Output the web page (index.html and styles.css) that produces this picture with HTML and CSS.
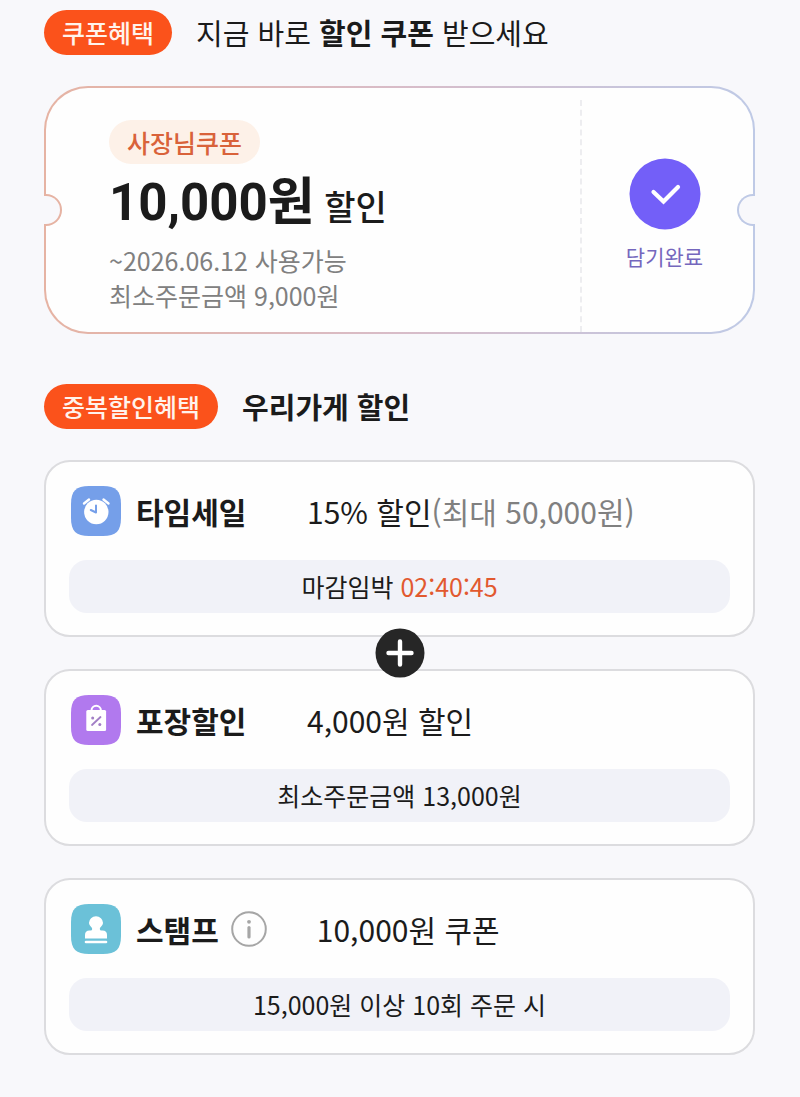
FILE: index.html
```html
<!DOCTYPE html>
<html lang="ko">
<head>
    <meta charset="UTF-8">
    <meta name="viewport" content="width=device-width, initial-scale=1.0">
    <title>할인 쿠폰</title>
    <link rel="stylesheet" href="styles.css">
</head>
<body>
    <main>
        <section>
            <header class="section-header">
                <span class="tag">쿠폰혜택</span>
                <h2 class="light">지금 바로 <strong>할인 쿠폰</strong> 받으세요</h2>
            </header>

            <div class="coupon">
                <div class="coupon-info">
                    <span class="owner-badge">사장님쿠폰</span>
                    <p class="amount"><strong>10,000원</strong> 할인</p>
                    <p class="terms">~2026.06.12 사용가능</p>
                    <p class="terms">최소주문금액 9,000원</p>
                </div>
                <div class="coupon-action">
                    <button type="button" class="download">
                        <svg width="72" height="72" viewBox="0 0 72 72" aria-hidden="true">
                            <circle cx="36" cy="36" r="35.5" fill="#735ff8"/>
                            <path d="M24.5 34 L34.5 43.5 L49 29" fill="none" stroke="#fff" stroke-width="4.2" stroke-linecap="round"/>
                        </svg>
                        <span>담기완료</span>
                    </button>
                </div>
                <span class="notch notch-left"></span>
                <span class="notch notch-right"></span>
            </div>
        </section>

        <section>
            <header class="section-header">
                <span class="tag">중복할인혜택</span>
                <h2>우리가게 할인</h2>
            </header>

            <div class="benefits">
                <article class="card">
                    <div class="card-row">
                        <svg class="icon" viewBox="0 0 50 50" aria-hidden="true">
                            <path d="M18 0H32C45 0 50 5 50 18V32C50 45 45 50 32 50H18C5 50 0 45 0 32V18C0 5 5 0 18 0Z" fill="#759fe9"/>
                            <circle cx="25.3" cy="26" r="12.2" fill="#fff"/>
                            <path d="M13 17.5 L18 13.5 M32.5 13.5 L37.5 17.5" stroke="#fff" stroke-width="2.4" stroke-linecap="round"/>
                            <path d="M25 19.5 V26.5 L19.8 24" fill="none" stroke="#759fe9" stroke-width="2" stroke-linecap="round" stroke-linejoin="round"/>
                        </svg>
                        <div class="name"><h3>타임세일</h3></div>
                        <p class="value">15% 할인<span class="limit">(최대 50,000원)</span></p>
                    </div>
                    <p class="note">마감임박 <span class="timer">02:40:45</span></p>
                </article>

                <article class="card">
                    <span class="plus">
                        <svg width="50" height="50" viewBox="0 0 50 50" aria-hidden="true">
                            <circle cx="25" cy="25" r="24.5" fill="#262626"/>
                            <path d="M25 13.5 V36.5 M13.5 25 H36.5" stroke="#fff" stroke-width="4.4" stroke-linecap="round"/>
                        </svg>
                    </span>
                    <div class="card-row">
                        <svg class="icon" viewBox="0 0 50 50" aria-hidden="true">
                            <path d="M18 0H32C45 0 50 5 50 18V32C50 45 45 50 32 50H18C5 50 0 45 0 32V18C0 5 5 0 18 0Z" fill="#b179ee"/>
                            <path d="M20.5 17 V15.5 A4.7 4.7 0 0 1 29.9 15.5 V17" fill="none" stroke="#fff" stroke-width="2"/>
                            <rect x="15.3" y="15" width="19.8" height="21" rx="1.5" fill="#fff"/>
                            <path d="M21 30 L29.5 22" stroke="#a27fc6" stroke-width="1.8" stroke-linecap="round"/>
                            <circle cx="21.7" cy="23" r="1.5" fill="#a27fc6"/>
                            <circle cx="28.8" cy="29.5" r="1.5" fill="#a27fc6"/>
                        </svg>
                        <div class="name"><h3>포장할인</h3></div>
                        <p class="value">4,000원 할인</p>
                    </div>
                    <p class="note">최소주문금액 13,000원</p>
                </article>

                <article class="card">
                    <div class="card-row">
                        <svg class="icon" viewBox="0 0 50 50" aria-hidden="true">
                            <path d="M18 0H32C45 0 50 5 50 18V32C50 45 45 50 32 50H18C5 50 0 45 0 32V18C0 5 5 0 18 0Z" fill="#6bc1d8"/>
                            <path d="M21.2 25 C21.2 23 18 22 18 18.8 A7 6.6 0 0 1 32 18.8 C32 22 28.8 23 28.8 25 Q28.8 26.5 30.5 26.5 H31.5 Q36 26.5 36 31 V34.5 H14 V31 Q14 26.5 18.5 26.5 H19.5 Q21.2 26.5 21.2 25Z" fill="#fff"/>
                            <path d="M15 38 H35" stroke="#fff" stroke-width="2.6" stroke-linecap="round"/>
                        </svg>
                        <div class="name">
                            <h3>스탬프</h3>
                            <button type="button" class="info" aria-label="스탬프 안내">
                                <svg width="36" height="36" viewBox="0 0 36 36" aria-hidden="true">
                                    <circle cx="18" cy="18" r="16.8" fill="none" stroke="#a6a6a6" stroke-width="2"/>
                                    <circle cx="18" cy="10.8" r="1.9" fill="#a6a6a6"/>
                                    <path d="M18 16.5 V26" stroke="#a6a6a6" stroke-width="3.2" stroke-linecap="round"/>
                                </svg>
                            </button>
                        </div>
                        <p class="value">10,000원 쿠폰</p>
                    </div>
                    <p class="note">15,000원 이상 10회 주문 시</p>
                </article>
            </div>
        </section>
    </main>
</body>
</html>
```
FILE: styles.css
```css
* {
    box-sizing: border-box;
}

body {
    margin: 0;
    background-color: #f8f8fb;
    color: #1b1b1b;
    font-family: "Noto Sans CJK KR", sans-serif;
    font-size: 25px;
}

h2, h3, p {
    margin: 0;
}

button {
    padding: 0;
    border: none;
    background: none;
    font-family: inherit;
    cursor: pointer;
}

main {
    display: flex;
    flex-direction: column;
    gap: 50px;
    padding: 10px 45px 42px 44px;
}

.section-header {
    display: flex;
    align-items: center;
    gap: 24px;
    margin-bottom: 31px;
}

.section-header h2 {
    padding-bottom: 2px;
    font-size: 29px;
    line-height: 42px;
    font-weight: 700;
}

.section-header h2.light {
    font-weight: 400;
}

.tag {
    padding: 0 18px;
    border-radius: 23px;
    background-color: #fb521b;
    color: #fff3ec;
    font-weight: 500;
    line-height: 45px;
}

/* Coupon */
.coupon {
    position: relative;
    display: flex;
    border: 2px solid transparent;
    border-radius: 44px;
    background: linear-gradient(#fefefe, #fefefe) padding-box,
                linear-gradient(90deg, #e6b3a3, #d8bcc8 50%, #bfcae6) border-box;
}

.coupon-info {
    flex: 1;
    padding: 32px 0 19px 63px;
}

.owner-badge {
    display: block;
    width: fit-content;
    padding: 0 18px;
    border-radius: 22px;
    background-color: #fdf1e8;
    color: #d9623a;
    font-weight: 500;
    line-height: 44px;
}

.amount {
    padding-top: 2px;
    font-size: 34px;
    font-weight: 500;
    line-height: 74px;
}

.amount strong {
    font-family: Roboto, "Noto Sans CJK KR", sans-serif;
    font-size: 51px;
    font-weight: 700;
}

.terms {
    color: #808080;
    font-weight: 400;
    line-height: 35px;
}

.coupon-action {
    display: flex;
    justify-content: center;
    width: 173px;
    margin-top: 12px;
    padding: 58px 6px 0 0;
    border-left: 2px dashed #ededf0;
}

.download {
    display: flex;
    flex-direction: column;
    align-items: center;
    align-self: flex-start;
    gap: 11px;
    color: #7567bd;
    font-size: 21px;
    line-height: 30px;
}

.notch {
    position: absolute;
    top: 50%;
    width: 18px;
    height: 32px;
    margin-top: -16px;
    background-color: #f8f8fb;
}

.notch-left {
    left: -2px;
    border: 2px solid #e6b3a3;
    border-left: none;
    border-radius: 0 16px 16px 0;
}

.notch-right {
    right: -2px;
    border: 2px solid #bfcae6;
    border-right: none;
    border-radius: 16px 0 0 16px;
}

/* Discount cards */
.benefits {
    display: flex;
    flex-direction: column;
    gap: 32px;
}

.card {
    position: relative;
    padding: 24px 23px 22px;
    border: 2px solid #dcdcdf;
    border-radius: 26px;
    background-color: #fefefe;
}

.card-row {
    display: flex;
    align-items: center;
    margin-bottom: 24px;
    padding-left: 2px;
}

.icon {
    width: 50px;
    height: 50px;
    margin-right: 15px;
}

.name {
    display: flex;
    align-items: center;
    gap: 12px;
    min-width: 121px;
    margin-right: 50px;
}

.name h3 {
    font-size: 30px;
    font-weight: 700;
    line-height: 44px;
}

.info {
    display: flex;
}

.value {
    font-size: 30px;
    line-height: 44px;
}

.limit {
    color: #808080;
}

.note {
    border-radius: 18px;
    background-color: #f1f2f8;
    line-height: 53px;
    text-align: center;
}

.timer {
    color: #e2592f;
}

.plus {
    position: absolute;
    top: -43px;
    left: 50%;
    display: flex;
    margin-left: -25px;
}
```
